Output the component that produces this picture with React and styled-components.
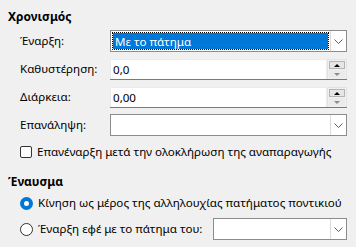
import styled, { createGlobalStyle } from 'styled-components';

const GlobalStyle = createGlobalStyle`
  html, body { margin: 0; background: #f0f0f0; }
  body {
    font-family: "Noto Sans", "Open Sans", sans-serif;
    font-size: 11.6px;
    color: #000;
  }
`;

const Panel = styled.div`
  width: 356px;
  height: 247px;
  box-sizing: border-box;
  padding: 9px 9px 0 8px;
  overflow: hidden;
`;

const SectionTitle = styled.div`
  font-weight: bold;
  font-size: 12px;
  line-height: 16px;
  margin-top: ${p => p.top || 0}px;
`;

const FieldGrid = styled.div`
  display: grid;
  grid-template-columns: 90px 237px;
  grid-auto-rows: 22px;
  row-gap: 6px;
  align-items: center;
  margin: 5px 0 0 12px;
`;

const Label = styled.div`
  line-height: 16px;
  white-space: nowrap;
`;

const SelectBox = styled.div`
  display: flex;
  height: 22px;
  width: ${p => p.width ? p.width + 'px' : 'auto'};
  margin-left: ${p => p.width ? 'auto' : '0'};
  box-sizing: border-box;
  border: 1px solid #8c8c8c;
  background: #fff;
`;

const SelectValue = styled.div`
  flex: 1;
  display: flex;
  padding: 1px;
`;

const SelectFocus = styled.div`
  flex: 1;
  display: flex;
  align-items: center;
  padding-left: 2px;
  border: 1px dotted #000;
  background: #0078d7;
  background-clip: padding-box;
  color: #fff;
  white-space: nowrap;
`;

const SelectButton = styled.div`
  width: 15px;
  border-left: 1px solid #dcdcdc;
  display: flex;
  align-items: center;
  justify-content: center;
`;

const SpinBox = styled.div`
  display: flex;
  height: 21px;
  margin-top: 1px;
  box-sizing: border-box;
  border-bottom: 1px solid #7a7a7a;
`;

const SpinInput = styled.div`
  flex: 1;
  background: #fff;
  border: 1px solid #ececec;
  border-bottom: none;
  display: flex;
  align-items: center;
  padding-left: 2px;
`;

const SpinButtons = styled.div`
  width: 16px;
  padding: 1px;
  background: #f0f0f0;
  border: 1px solid #e3e3e3;
  border-bottom: none;
  display: flex;
  flex-direction: column;
  gap: 1px;
`;

const SpinArrow = styled.div`
  flex: 1;
  display: flex;
  align-items: center;
  justify-content: center;
  border: 1px solid ${p => p.disabled ? 'transparent' : '#b4b4b4'};
  background: ${p => p.disabled ? '#ebebeb' : '#e6e6e6'};

  &::after {
    content: "";
    border-left: 3.5px solid transparent;
    border-right: 3.5px solid transparent;
    ${p => p.down
      ? `border-top: 3.5px solid ${p.disabled ? '#8c8c8c' : '#000'};`
      : `border-bottom: 3.5px solid ${p.disabled ? '#8c8c8c' : '#000'};`}
  }
`;

const CheckRow = styled.label`
  display: flex;
  align-items: center;
  gap: 5px;
  line-height: 16px;
  margin: 8px 0 0 12px;
  white-space: nowrap;
`;

const CheckBox = styled.span`
  width: 12px;
  height: 12px;
  box-sizing: border-box;
  border: 1px solid #333;
  border-radius: 2px;
  background: #fff;
`;

const RadioRow = styled.label`
  display: flex;
  align-items: center;
  gap: 5px;
  line-height: 16px;
  min-height: ${p => p.tall ? '22px' : '16px'};
  margin: ${p => p.top}px 0 0 12px;
  white-space: nowrap;
`;

const RadioDot = styled.span`
  width: 13px;
  height: 13px;
  flex: none;
  box-sizing: border-box;
  border-radius: 50%;
  border: ${p => p.checked ? '4px solid #0078d7' : '1px solid #333'};
  background: #fff;
`;

const Chevron = () => (
  <svg width="9" height="5" viewBox="0 0 9 5">
    <path d="M0.5 0.5 L4.5 4.5 L8.5 0.5" fill="none" stroke="#606060" strokeWidth="1" />
  </svg>
);

const Select = ({ value, width }) => (
  <SelectBox width={width}>
    <SelectValue>{value && <SelectFocus>{value}</SelectFocus>}</SelectValue>
    <SelectButton><Chevron /></SelectButton>
  </SelectBox>
);

const Spin = ({ value }) => (
  <SpinBox>
    <SpinInput>{value}</SpinInput>
    <SpinButtons>
      <SpinArrow />
      <SpinArrow down disabled />
    </SpinButtons>
  </SpinBox>
);

export default function App() {
  return (
    <Panel>
      <GlobalStyle />
      <SectionTitle>Χρονισμός</SectionTitle>
      <FieldGrid>
        <Label>Έναρξη:</Label>
        <Select value="Με το πάτημα" />
        <Label>Καθυστέρηση:</Label>
        <Spin value="0,0" />
        <Label>Διάρκεια:</Label>
        <Spin value="0,00" />
        <Label>Επανάληψη:</Label>
        <Select />
      </FieldGrid>
      <CheckRow>
        <CheckBox />
        Επανέναρξη μετά την ολοκλήρωση της αναπαραγωγής
      </CheckRow>
      <SectionTitle top={14}>Έναυσμα</SectionTitle>
      <RadioRow top={5}>
        <RadioDot checked />
        Κίνηση ως μέρος της αλληλουχίας πατήματος ποντικιού
      </RadioRow>
      <RadioRow top={7} tall>
        <RadioDot />
        Έναρξη εφέ με το πάτημα του:
        <Select width={134} />
      </RadioRow>
    </Panel>
  );
}
